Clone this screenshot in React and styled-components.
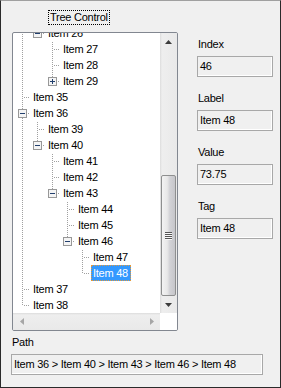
import React from 'react';
import styled, { createGlobalStyle } from 'styled-components';

const GlobalStyle = createGlobalStyle`
  body {
    margin: 0;
    background: #f0f0f0;
  }
`;

const rows = [
  { label: 'Item 26', level: 1, box: 'minus' },
  { label: 'Item 27', level: 2 },
  { label: 'Item 28', level: 2 },
  { label: 'Item 29', level: 2, box: 'plus' },
  { label: 'Item 35', level: 0 },
  { label: 'Item 36', level: 0, box: 'minus' },
  { label: 'Item 39', level: 1 },
  { label: 'Item 40', level: 1, box: 'minus' },
  { label: 'Item 41', level: 2 },
  { label: 'Item 42', level: 2 },
  { label: 'Item 43', level: 2, box: 'minus' },
  { label: 'Item 44', level: 3 },
  { label: 'Item 45', level: 3 },
  { label: 'Item 46', level: 3, box: 'minus' },
  { label: 'Item 47', level: 4 },
  { label: 'Item 48', level: 4, selected: true },
  { label: 'Item 37', level: 0 },
  { label: 'Item 38', level: 0 },
];

const fields = [
  { label: 'Index', value: '46' },
  { label: 'Label', value: 'Item 48' },
  { label: 'Value', value: '73.75' },
  { label: 'Tag', value: 'Item 48' },
];

// does the line of depth `level` go on below row i?
const continues = (i, level) => {
  for (let j = i + 1; j < rows.length; j++) {
    if (rows[j].level < level) return false;
    if (rows[j].level === level) return true;
  }
  return false;
};

const Window = styled.div`
  width: 281px;
  height: 388px;
  box-sizing: border-box;
  border: 1px solid #2a2a2a;
  border-top-color: #a0a0a0;
  background: #f0f0f0;
  font-family: "Liberation Sans", Arial, sans-serif;
  font-size: 11px;
  letter-spacing: -0.25px;
  color: #000;
  display: flex;
  flex-direction: column;
`;

const Top = styled.div`
  display: flex;
  align-items: flex-start;
  padding-left: 11px;
`;

const TreeColumn = styled.div`
  width: 166px;
  display: flex;
  flex-direction: column;
`;

const Title = styled.div`
  align-self: flex-start;
  margin: 9px 0 0 36px;
  height: 15px;
  box-sizing: border-box;
  border: 1px dotted #000;
  padding: 0 1px;
  line-height: 13px;
`;

const TreeFrame = styled.div`
  margin-top: 7px;
  height: 299px;
  box-sizing: border-box;
  border: 1px solid #828790;
  border-radius: 2px;
  background: #fff;
  display: grid;
  grid-template-columns: 1fr 17px;
  grid-template-rows: 1fr 17px;
  overflow: hidden;
`;

const Viewport = styled.div`
  overflow: hidden;
`;

const TreeList = styled.div`
  margin-top: -8px;
  display: flex;
  flex-direction: column;
`;

const TreeRow = styled.div`
  display: flex;
  align-items: center;
  height: 16px;
  padding-left: 2px;

  svg {
    display: block;
    flex: none;
  }
`;

const Node = styled.span`
  margin-left: 1px;
  height: 16px;
  box-sizing: border-box;
  padding: 0 2px 0 1px;
  line-height: 14px;
  white-space: nowrap;
  border: 1px ${(p) => (p.$selected ? 'dotted #e39a3c' : 'solid transparent')};
  background: ${(p) => (p.$selected ? '#3399ff' : 'transparent')};
  color: ${(p) => (p.$selected ? '#fff' : '#000')};
`;

const VScroll = styled.div`
  display: flex;
  flex-direction: column;
  background: linear-gradient(to right, #dcdcdc, #eeeeee 2px, #e9e9e9);
`;

const HScroll = styled.div`
  display: flex;
  justify-content: space-between;
  background: linear-gradient(to bottom, #dcdcdc, #eeeeee 2px, #e9e9e9);
`;

const ArrowButton = styled.div`
  width: ${(p) => (p.$horizontal ? '17px' : 'auto')};
  height: 17px;
  flex: none;
  display: flex;
  align-items: center;
  justify-content: center;
`;

const Track = styled.div`
  flex: 1;
  display: flex;
  flex-direction: column;
  justify-content: flex-end;
`;

const Thumb = styled.div`
  margin: 0 1px;
  box-sizing: border-box;
  border: 1px solid #8e8f8f;
  border-radius: 2px;
  background: linear-gradient(to right, #f3f3f3, #e8e8e8 40%, #d2d2d6 60%, #c6c6ca);
  display: flex;
  align-items: center;
  justify-content: center;
`;

const Grip = styled.div`
  width: 7px;
  height: 8px;
  background: repeating-linear-gradient(to bottom, #555 0 1px, #f8f8f8 1px 2px);
`;

const Corner = styled.div`
  background: #fff;
`;

const SidePanel = styled.div`
  margin-left: 19px;
  width: 76px;
  padding-top: 37px;
  display: flex;
  flex-direction: column;
  gap: 15px;
`;

const Field = styled.div`
  display: flex;
  flex-direction: column;
`;

const FieldLabel = styled.div`
  line-height: 13px;
  margin-bottom: 5px;
  padding-left: ${(p) => (p.$indent ? '1px' : '0')};
`;

const TextBox = styled.div`
  height: 21px;
  box-sizing: border-box;
  border: 1px solid #a8a8a8;
  box-shadow: inset -1px -1px 0 #fff;
  background: #f0f0f0;
  padding: 0 2px;
  line-height: 19px;
  white-space: nowrap;
  overflow: hidden;
  width: ${(p) => p.$width || 'auto'};
`;

const PathSection = styled.div`
  margin-top: 5px;
  padding-left: 10px;
  display: flex;
  flex-direction: column;
`;

const Connector = ({ up, down, branch, box }) => (
  <svg width="15" height="16" viewBox="0 0 15 16" shapeRendering="crispEdges">
    {(up || down) && (
      <line x1="7.5" x2="7.5" y1={up ? 0 : 8} y2={down ? 16 : 9}
        stroke="#a0a0a0" strokeDasharray="1 1" strokeDashoffset="1" />
    )}
    {branch && (
      <line x1="9" x2="15" y1="8.5" y2="8.5" stroke="#a0a0a0" strokeDasharray="1 1" />
    )}
    {box && (
      <g>
        <rect x="3.5" y="4.5" width="8" height="8" fill="#f4f4f4" stroke="#989898" />
        <line x1="5" x2="10" y1="8.5" y2="8.5" stroke="#22406e" />
        {box === 'plus' && <line x1="7.5" x2="7.5" y1="6" y2="11" stroke="#22406e" />}
      </g>
    )}
  </svg>
);

const Arrow = ({ dir, color }) => {
  const pts = {
    up: '0,4 3.5,0 7,4',
    down: '0,0 3.5,4 7,0',
    left: '4,0 0,3.5 4,7',
    right: '0,0 4,3.5 0,7',
  }[dir];
  const vertical = dir === 'up' || dir === 'down';
  return (
    <svg width={vertical ? 7 : 4} height={vertical ? 4 : 7}>
      <polygon points={pts} fill={color} />
    </svg>
  );
};

const TreeView = () => (
  <TreeFrame>
    <Viewport>
      <TreeList>
        {rows.map((row, i) => (
          <TreeRow key={row.label}>
            {Array.from({ length: row.level }, (_, l) => (
              <Connector key={l} up={continues(i, l)} down={continues(i, l)} />
            ))}
            <Connector up down={continues(i, row.level)} branch box={row.box} />
            <Node $selected={row.selected}>{row.label}</Node>
          </TreeRow>
        ))}
      </TreeList>
    </Viewport>
    <VScroll>
      <ArrowButton><Arrow dir="up" color="#3c3c3c" /></ArrowButton>
      <Track>
        <Thumb style={{ height: 121 }}>
          <Grip />
        </Thumb>
      </Track>
      <ArrowButton><Arrow dir="down" color="#3c3c3c" /></ArrowButton>
    </VScroll>
    <HScroll>
      <ArrowButton $horizontal><Arrow dir="left" color="#a6a6a6" /></ArrowButton>
      <ArrowButton $horizontal><Arrow dir="right" color="#a6a6a6" /></ArrowButton>
    </HScroll>
    <Corner />
  </TreeFrame>
);

const App = () => (
  <>
    <GlobalStyle />
    <Window>
      <Top>
        <TreeColumn>
          <Title>Tree Control</Title>
          <TreeView />
        </TreeColumn>
        <SidePanel>
          {fields.map((f) => (
            <Field key={f.label}>
              <FieldLabel $indent>{f.label}</FieldLabel>
              <TextBox>{f.value}</TextBox>
            </Field>
          ))}
        </SidePanel>
      </Top>
      <PathSection>
        <FieldLabel $indent>Path</FieldLabel>
        <TextBox $width="252px">Item 36 &gt; Item 40 &gt; Item 43 &gt; Item 46 &gt; Item 48</TextBox>
      </PathSection>
    </Window>
  </>
);

export default App;
